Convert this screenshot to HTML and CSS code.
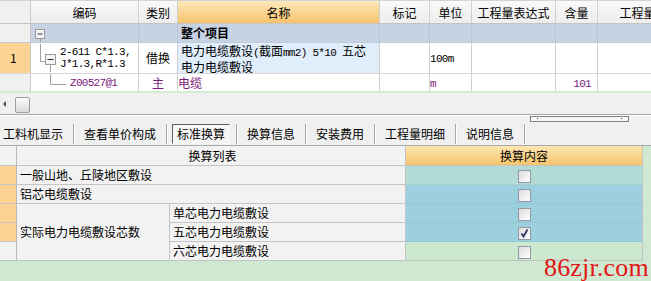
FILE: index.html
```html
<!DOCTYPE html>
<html><head><meta charset="utf-8"><link rel="stylesheet" href="styles.css"></head>
<body>
<div class="top">
  <table class="grid">
    <colgroup><col class="c0"><col class="c1"><col class="c2"><col class="c3"><col class="c4"><col class="c5"><col class="c6"><col class="c7"><col class="c8"></colgroup>
    <thead><tr><th class="rh"></th><th>编码</th><th>类别</th><th class="sel">名称</th><th>标记</th><th>单位</th><th>工程量表达式</th><th>含量</th><th>工程量</th></tr></thead>
    <tbody>
      <tr class="proj">
        <td class="rh"></td>
        <td class="code"><svg width="40" height="18" class="tree"><path d="M9.5 15V18" stroke="#a0a0a0"/><rect x="4.5" y="5.5" width="9" height="9" fill="#f4f4f4" stroke="#9a9a9a"/><path d="M6.5 10H11.5" stroke="#303030"/></svg></td>
        <td></td><td class="bold">整个项目</td><td></td><td></td><td></td><td></td><td></td>
      </tr>
      <tr class="r1">
        <td class="rh org">1</td>
        <td class="code"><div class="cell"><svg width="29" height="28" class="tree"><path d="M9.5 0V17.5H14" stroke="#a0a0a0" fill="none"/><path d="M19.5 21V28" stroke="#a0a0a0"/><rect x="14.5" y="10.5" width="10" height="10" fill="#f4f4f4" stroke="#9a9a9a"/><path d="M16.5 15.5H22.5" stroke="#303030"/></svg><span class="mono two">2-611 C*1.3,<br>J*1.3,R*1.3</span></div></td>
        <td class="ctr">借换</td>
        <td class="name"><div class="nm">电力电缆敷设<span class="mono">(</span>截面<span class="mono">mm2) 5*10 </span>五芯</div><div class="nm">电力电缆敷设</div></td>
        <td></td><td class="unit"><span class="mono">100m</span></td><td></td><td></td><td></td>
      </tr>
      <tr class="r2">
        <td class="rh"></td>
        <td class="code"><div class="cell"><svg width="39" height="18" class="tree"><path d="M19.5 0V10.5H35" stroke="#a0a0a0" fill="none"/></svg><span class="mono pur">Z00527@1</span></div></td>
        <td class="ctr pur">主</td>
        <td class="pur pl">电缆</td>
        <td></td><td class="pur pl"><span class="mono">m</span></td><td></td><td class="num pur"><span class="mono">101</span></td><td></td>
      </tr>
    </tbody>
  </table>
</div>
<div class="gap"></div>
<div class="scroll"><span class="arrow"></span><span class="thumb"></span></div>
<div class="tabs">
  <span class="tab first">工料机显示</span><span class="sep"></span>
  <span class="tab">查看单价构成</span><span class="sep"></span>
  <span class="tab on">标准换算</span><span class="sep"></span>
  <span class="tab">换算信息</span><span class="sep"></span>
  <span class="tab">安装费用</span><span class="sep"></span>
  <span class="tab">工程量明细</span><span class="sep"></span>
  <span class="tab">说明信息</span><span class="sep"></span>
  <span class="mini"><i></i><i></i></span>
</div>
<div class="lower">
  <table class="conv">
    <colgroup><col class="k0"><col class="k1"><col class="k2"><col class="k3"></colgroup>
    <tr class="hd"><th class="rh"></th><th colspan="2" class="ctr">换算列表</th><th class="hsel">换算内容</th></tr>
    <tr><td class="rh org"></td><td colspan="2">一般山地、丘陵地区敷设</td><td class="chk v1"><span class="box"></span></td></tr>
    <tr><td class="rh org"></td><td colspan="2">铝芯电缆敷设</td><td class="chk v2"><span class="box"></span></td></tr>
    <tr><td class="rh org"></td><td rowspan="3">实际电力电缆敷设芯数</td><td>单芯电力电缆敷设</td><td class="chk v2"><span class="box"></span></td></tr>
    <tr><td class="rh org"></td><td>五芯电力电缆敷设</td><td class="chk v2"><span class="box"><svg width="11" height="11" viewBox="0 0 11 11"><path d="M2.5 5.5L4.5 8.5L8.5 1.5" stroke="#2e3a66" stroke-width="1.8" fill="none"/></svg></span></td></tr>
    <tr><td class="rh"></td><td>六芯电力电缆敷设</td><td class="chk v3"><span class="box"></span></td></tr>
  </table>
  <div class="mark">86zjr.com</div>
</div>
</body></html>
```

FILE: styles.css
```css
*{box-sizing:border-box}
body{margin:0;width:651px;height:281px;overflow:hidden;background:#cfe8d2;font-family:"Noto Sans CJK SC","Noto Sans",sans-serif;font-size:12px;color:#000}
.mono{font-family:"Liberation Mono",monospace;font-size:11px;letter-spacing:-0.7px}
.pur{color:#7a1a7a}
.top{height:91px;overflow:hidden;background:#fff}
.grid{border-collapse:separate;border-spacing:0;table-layout:fixed;width:678px}
.c0{width:31px}.c1{width:108px}.c2{width:39px}.c3{width:202px}.c4{width:50px}.c5{width:42px}.c6{width:84px}.c7{width:42px}.c8{width:80px}
.grid th,.grid td{padding:0;border-right:1px solid #d0d0d0;border-bottom:1px solid #d8d8d8;overflow:hidden;white-space:nowrap;font-weight:normal;vertical-align:middle;line-height:12px}
.grid thead th{height:24px;padding-top:1px;background:linear-gradient(#f9f9f9,#ededed);border-top:1px solid #d4d4d4;border-bottom-color:#c4c4c4;text-align:center;line-height:20px}
.grid thead th.sel{background:linear-gradient(#fde9bb,#f6c36b)}
.grid .rh{background:#f0f0f0;border-right-color:#c8c8c8}
.grid .rh.org{background:#fcd392;padding-left:10px;vertical-align:middle}
.proj td{height:19px;background:#c7d3e3;border-right-color:#bac6d6;border-bottom-color:#c0ccdc}
.proj td.rh{background:#f0f0f0}
.proj .bold{font-weight:bold;padding-left:3px}
.tree{display:block;flex:none}
.r1 td{height:29px}
.r2 td{height:19px}
.cell{display:flex;align-items:flex-start}
.two{display:block;padding-top:2px;line-height:12px}
.r2 .cell{align-items:center}
.ctr{text-align:center}
.r1 .name{background:#e0edfb;padding-left:3px;vertical-align:top;padding-top:1px}
.nm{line-height:13px}
.unit{padding-left:3px;padding-top:8px}
.pl{padding-left:3px}
.num{text-align:right;padding-right:6px!important}
.gap{height:2px;background:#d4ebd4}
.scroll{height:22px;border-bottom:1px solid #a6a6a6;background:#f0f0f0;display:flex;align-items:center;padding-left:3px}
.arrow{width:0;height:0;border-top:3px solid transparent;border-bottom:3px solid transparent;border-right:3px solid #505050}
.thumb{width:15px;height:16px;margin-left:9px;margin-top:2px;border:1px solid #9c9c9c;border-radius:2px;background:linear-gradient(#fbfbfb,#dadada)}
.tabs{height:31px;border-bottom:1px solid #a8a8a8;background:#f0f0f0;display:flex;align-items:flex-end;padding-bottom:1px;box-shadow:inset 0 1px #fff}
.tab{height:20px;line-height:20px;padding:0 10px;white-space:nowrap}
.tab.first{padding-left:3px}
.tab.on{padding:0 4px;margin:0 5px;border:1px solid;border-color:#606060 #f8f8f8 #f8f8f8 #606060;background:#f6f6f6;line-height:18px}
.tab.on + .sep{margin-left:1px}
.sep{width:1px;height:20px;background:#a6a6a6;box-shadow:1px 0 #fff;flex:none}
.mini{align-self:flex-start;margin-top:1px;margin-left:5px;width:99px;height:6px;border:1px solid #808080;background:#f8f8f8;display:flex;justify-content:space-between;padding:1px 6px}
.mini i{width:1px;height:1px;background:#404040;display:block}
.lower{position:relative;height:136px}
.conv{border-collapse:separate;border-spacing:0;table-layout:fixed;width:643px}
.k0{width:17px}.k1{width:153px}.k2{width:236px}.k3{width:237px}
.conv th,.conv td{padding:0 0 0 3px;height:19px;border-bottom:1px solid #c4c4c4;border-right:1px solid #c4c4c4;background:#f2f2f2;font-weight:normal;text-align:left;white-space:nowrap;line-height:16px}
.conv .hd th{height:20px}
.conv th.ctr{text-align:center}
.conv .rh{padding:0;border-right-color:#b8b8b8}
.conv .rh.org{background:#fbd28f}
.conv th.hsel{background:linear-gradient(#fde6b2,#f6c46c);text-align:center;padding:0}
.conv td.chk{text-align:center;padding:0}
.conv .v1{background:#b3dbd6;border-bottom-color:#a9d1cc}
.conv .v2{background:#9dd0df;border-bottom-color:#93c6d4}
.conv .v3{background:#cce9d0;border-bottom-color:#c0c0c0}
.box{display:inline-block;width:13px;height:13px;border:1px solid #8f9aa6;background:linear-gradient(135deg,#dcdcdc,#ffffff);vertical-align:middle;margin-top:-1px}
.box svg{display:block}
.mark{position:absolute;right:2px;bottom:0;font-family:"Liberation Serif",serif;font-size:26px;line-height:28px;color:#e21414;letter-spacing:0.2px}
```
